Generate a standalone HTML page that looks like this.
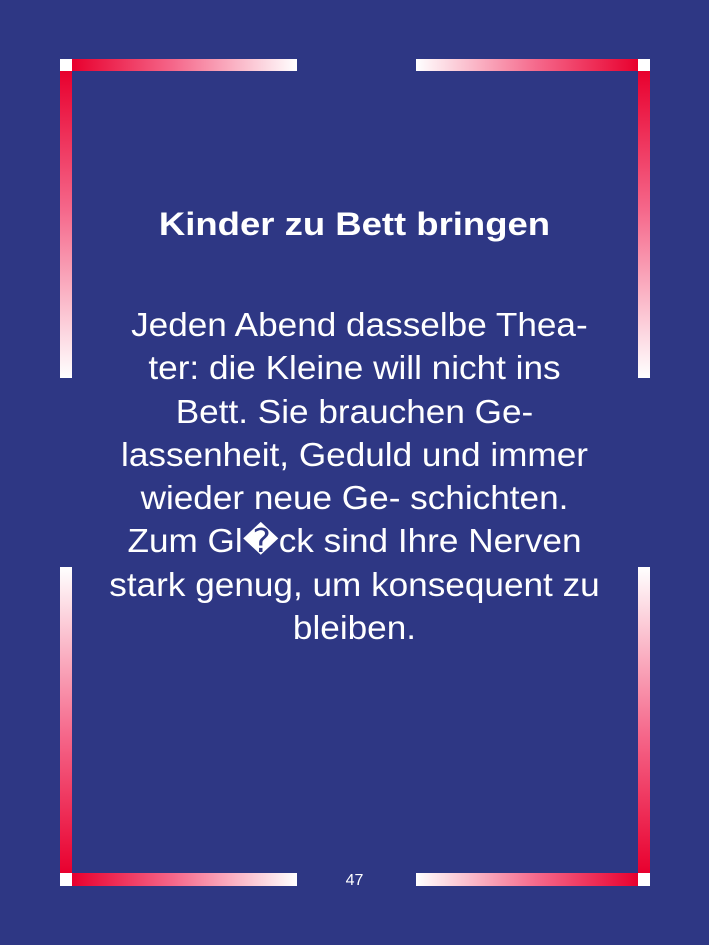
<!DOCTYPE html>
<html><head><meta charset="utf-8"><style>
html,body{margin:0;padding:0}
body{width:709px;height:945px;background:#2e3784;position:relative;overflow:hidden;font-family:"Liberation Sans","DejaVu Sans",sans-serif;color:#fff}
.b{position:absolute}
.t{position:absolute;left:0;width:709px;text-align:center;white-space:nowrap}
</style></head><body>
<div class="b" style="left:72px;top:59px;width:225px;height:12px;background:linear-gradient(to right,#e8002e,#f5678a 45%,#fff)"></div>
<div class="b" style="left:60px;top:71px;width:12px;height:307px;background:linear-gradient(to bottom,#e8002e,#f5678a 45%,#fff)"></div>
<div class="b" style="left:60px;top:59px;width:12px;height:12px;background:#fff"></div>
<div class="b" style="left:416px;top:59px;width:222px;height:12px;background:linear-gradient(to left,#e8002e,#f5678a 45%,#fff)"></div>
<div class="b" style="left:638px;top:71px;width:12px;height:307px;background:linear-gradient(to bottom,#e8002e,#f5678a 45%,#fff)"></div>
<div class="b" style="left:638px;top:59px;width:12px;height:12px;background:#fff"></div>
<div class="b" style="left:72px;top:873px;width:225px;height:13px;background:linear-gradient(to right,#e8002e,#f5678a 45%,#fff)"></div>
<div class="b" style="left:60px;top:567px;width:12px;height:306px;background:linear-gradient(to top,#e8002e,#f5678a 45%,#fff)"></div>
<div class="b" style="left:60px;top:873px;width:12px;height:13px;background:#fff"></div>
<div class="b" style="left:416px;top:873px;width:222px;height:13px;background:linear-gradient(to left,#e8002e,#f5678a 45%,#fff)"></div>
<div class="b" style="left:638px;top:567px;width:12px;height:306px;background:linear-gradient(to top,#e8002e,#f5678a 45%,#fff)"></div>
<div class="b" style="left:638px;top:873px;width:12px;height:13px;background:#fff"></div>

<div class="t" style="top:203px;font-size:32px;font-weight:bold;line-height:42px;transform:scaleX(1.14);transform-origin:354.5px 0">Kinder zu Bett bringen</div>
<div class="t" style="top:303px;font-size:33px;line-height:43.3px;transform:scaleX(1.065);transform-origin:354.5px 0">
<div>&nbsp;Jeden Abend dasselbe Thea-</div>
<div>ter: die Kleine will nicht ins</div>
<div>Bett. Sie brauchen Ge-</div>
<div>lassenheit, Geduld und immer</div>
<div>wieder neue Ge- schichten.</div>
<div>Zum Gl�ck sind Ihre Nerven</div>
<div>stark genug, um konsequent zu</div>
<div>bleiben.</div>
</div>
<div class="t" style="top:872px;font-size:16px;line-height:18px">47</div>
</body></html>
